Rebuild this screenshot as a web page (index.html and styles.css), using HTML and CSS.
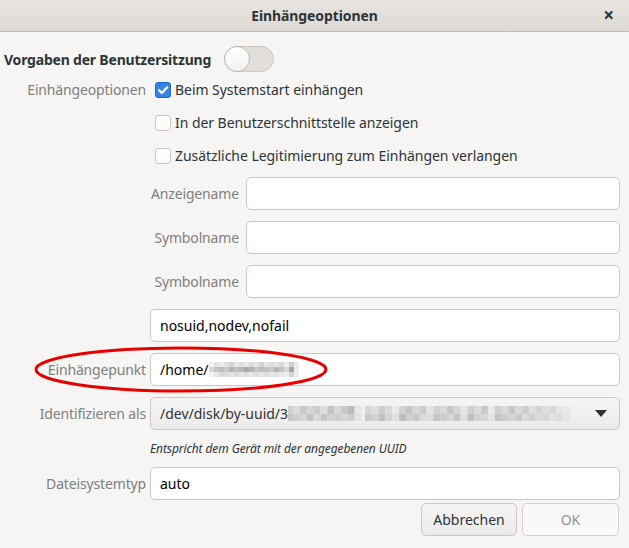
FILE: index.html
```html
<!DOCTYPE html>
<html lang="de">
<head>
<meta charset="utf-8">
<title>Einhängeoptionen</title>
<link rel="stylesheet" href="styles.css">
</head>
<body>
<div class="window">
  <header class="titlebar">
    <span class="title">Einhängeoptionen</span>
    <span class="close">×</span>
  </header>
  <main class="content">
    <div class="toprow">
      <span class="strong">Vorgaben der Benutzersitzung</span>
      <span class="switch"><span class="knob"></span></span>
    </div>
    <div class="form">
      <div class="label label-top">Einhängeoptionen</div>
      <div class="checks">
        <div class="check-row"><span class="check checked"><svg viewBox="0 0 16 16" width="16" height="16"><path d="M4 8.2 L6.8 11 L12.2 5.2" fill="none" stroke="#fff" stroke-width="2.2" stroke-linecap="round" stroke-linejoin="round"/></svg></span><span>Beim Systemstart einhängen</span></div>
        <div class="check-row"><span class="check"></span><span>In der Benutzerschnittstelle anzeigen</span></div>
        <div class="check-row"><span class="check"></span><span>Zusätzliche Legitimierung zum Einhängen verlangen</span></div>
      </div>

      <div></div>
      <div class="subgrid">
        <div class="label">Anzeigename</div><div class="entry"></div>
        <div class="label">Symbolname</div><div class="entry"></div>
        <div class="label">Symbolname</div><div class="entry"></div>
      </div>

      <div></div>
      <div class="entry">nosuid,nodev,nofail</div>

      <div class="label">Einhängepunkt</div>
      <div class="entry">/home/<svg class="blur" width="90" height="15" viewBox="0 0 90 15">
        <rect x="0" y="0" width="90" height="15" fill="#f2f2f2"/>
        <rect x="0" y="5" width="5" height="5" fill="#d6d6d6"/>
        <rect x="5" y="0" width="5" height="5" fill="#e4e4e4"/><rect x="5" y="5" width="5" height="5" fill="#c4c4c4"/><rect x="5" y="10" width="5" height="5" fill="#e6e6e6"/>
        <rect x="10" y="0" width="5" height="5" fill="#ececec"/><rect x="10" y="5" width="5" height="5" fill="#bdbdbd"/><rect x="10" y="10" width="5" height="5" fill="#d8d8d8"/>
        <rect x="15" y="0" width="5" height="5" fill="#e0e0e0"/><rect x="15" y="5" width="5" height="5" fill="#c8c8c8"/><rect x="15" y="10" width="5" height="5" fill="#dcdcdc"/>
        <rect x="20" y="0" width="5" height="5" fill="#d4d4d4"/><rect x="20" y="5" width="5" height="5" fill="#b4b4b4"/><rect x="20" y="10" width="5" height="5" fill="#e2e2e2"/>
        <rect x="25" y="0" width="5" height="5" fill="#e6e6e6"/><rect x="25" y="5" width="5" height="5" fill="#c0c0c0"/><rect x="25" y="10" width="5" height="5" fill="#dadada"/>
        <rect x="30" y="0" width="5" height="5" fill="#dedede"/><rect x="30" y="5" width="5" height="5" fill="#b8b8b8"/><rect x="30" y="10" width="5" height="5" fill="#e4e4e4"/>
        <rect x="35" y="0" width="5" height="5" fill="#e8e8e8"/><rect x="35" y="5" width="5" height="5" fill="#a9a9a9"/><rect x="35" y="10" width="5" height="5" fill="#e0e0e0"/>
        <rect x="40" y="0" width="5" height="5" fill="#dadada"/><rect x="40" y="5" width="5" height="5" fill="#b2b2b2"/><rect x="40" y="10" width="5" height="5" fill="#e8e8e8"/>
        <rect x="45" y="0" width="5" height="5" fill="#e4e4e4"/><rect x="45" y="5" width="5" height="5" fill="#c6c6c6"/><rect x="45" y="10" width="5" height="5" fill="#dcdcdc"/>
        <rect x="50" y="0" width="5" height="5" fill="#d2d2d2"/><rect x="50" y="5" width="5" height="5" fill="#bcbcbc"/><rect x="50" y="10" width="5" height="5" fill="#e6e6e6"/>
        <rect x="55" y="0" width="5" height="5" fill="#e6e6e6"/><rect x="55" y="5" width="5" height="5" fill="#c2c2c2"/><rect x="55" y="10" width="5" height="5" fill="#dedede"/>
        <rect x="60" y="0" width="5" height="5" fill="#dcdcdc"/><rect x="60" y="5" width="5" height="5" fill="#cacaca"/><rect x="60" y="10" width="5" height="5" fill="#e8e8e8"/>
        <rect x="65" y="0" width="5" height="5" fill="#e2e2e2"/><rect x="65" y="5" width="5" height="5" fill="#b6b6b6"/><rect x="65" y="10" width="5" height="5" fill="#e2e2e2"/>
        <rect x="70" y="0" width="5" height="5" fill="#d8d8d8"/><rect x="70" y="5" width="5" height="5" fill="#c4c4c4"/><rect x="70" y="10" width="5" height="5" fill="#eaeaea"/>
        <rect x="75" y="0" width="5" height="5" fill="#eeeeee"/><rect x="75" y="5" width="5" height="5" fill="#dadada"/><rect x="75" y="10" width="5" height="5" fill="#eeeeee"/>
        <rect x="80" y="0" width="5" height="5" fill="#d0d0d0"/><rect x="80" y="5" width="5" height="5" fill="#a4a4a4"/><rect x="80" y="10" width="5" height="5" fill="#d4d4d4"/>
        <rect x="85" y="0" width="5" height="15" fill="#ececec"/>
      </svg></div>

      <div class="label">Identifizieren als</div>
      <div class="combo">
        <span class="combo-text">/dev/disk/by-uuid/3<svg class="blur" width="282" height="15" viewBox="0 0 330 15" preserveAspectRatio="none">
          <rect x="0" y="0" width="330" height="15" fill="#f1f0ef"/>
          <rect x="0" y="0" width="6" height="8" fill="#d0d0d0"/><rect x="0" y="8" width="6" height="7" fill="#c6c6c6"/>
          <rect x="6" y="0" width="8" height="8" fill="#dadada"/><rect x="6" y="8" width="8" height="7" fill="#cfcfcf"/>
          <rect x="14" y="0" width="8" height="8" fill="#c8c8c8"/><rect x="14" y="8" width="8" height="7" fill="#d8d8d8"/>
          <rect x="22" y="0" width="8" height="8" fill="#d6d6d6"/><rect x="22" y="8" width="8" height="7" fill="#c4c4c4"/>
          <rect x="30" y="0" width="8" height="8" fill="#cccccc"/><rect x="30" y="8" width="8" height="7" fill="#dadada"/>
          <rect x="38" y="0" width="8" height="8" fill="#dedede"/><rect x="38" y="8" width="8" height="7" fill="#c8c8c8"/>
          <rect x="46" y="0" width="8" height="8" fill="#c4c4c4"/><rect x="46" y="8" width="8" height="7" fill="#d2d2d2"/>
          <rect x="54" y="0" width="8" height="8" fill="#d8d8d8"/><rect x="54" y="8" width="8" height="7" fill="#cccccc"/>
          <rect x="62" y="0" width="8" height="8" fill="#cacaca"/><rect x="62" y="8" width="8" height="7" fill="#d6d6d6"/>
          <rect x="70" y="0" width="8" height="8" fill="#bcbcbc"/><rect x="70" y="8" width="8" height="7" fill="#cfcfcf"/>
          <rect x="78" y="0" width="8" height="8" fill="#e6e6e6"/><rect x="78" y="8" width="8" height="7" fill="#e2e2e2"/>
          <rect x="90" y="0" width="8" height="8" fill="#d6d6d6"/><rect x="90" y="8" width="8" height="7" fill="#cacaca"/>
          <rect x="98" y="0" width="8" height="8" fill="#e0e0e0"/><rect x="98" y="8" width="8" height="7" fill="#d2d2d2"/>
          <rect x="106" y="0" width="8" height="8" fill="#cdcdcd"/><rect x="106" y="8" width="8" height="7" fill="#c2c2c2"/>
          <rect x="114" y="0" width="8" height="8" fill="#dadada"/><rect x="114" y="8" width="8" height="7" fill="#d4d4d4"/>
          <rect x="122" y="0" width="8" height="8" fill="#e8e8e8"/><rect x="122" y="8" width="8" height="7" fill="#e0e0e0"/>
          <rect x="130" y="0" width="8" height="8" fill="#d2d2d2"/><rect x="130" y="8" width="8" height="7" fill="#bebebe"/>
          <rect x="138" y="0" width="8" height="8" fill="#c6c6c6"/><rect x="138" y="8" width="8" height="7" fill="#d0d0d0"/>
          <rect x="146" y="0" width="8" height="8" fill="#d8d8d8"/><rect x="146" y="8" width="8" height="7" fill="#c8c8c8"/>
          <rect x="154" y="0" width="8" height="8" fill="#cccccc"/><rect x="154" y="8" width="8" height="7" fill="#dadada"/>
          <rect x="162" y="0" width="8" height="8" fill="#e4e4e4"/><rect x="162" y="8" width="8" height="7" fill="#dedede"/>
          <rect x="170" y="0" width="8" height="8" fill="#d2d2d2"/><rect x="170" y="8" width="8" height="7" fill="#c4c4c4"/>
          <rect x="178" y="0" width="8" height="8" fill="#dadada"/><rect x="178" y="8" width="8" height="7" fill="#cecece"/>
          <rect x="186" y="0" width="8" height="8" fill="#c8c8c8"/><rect x="186" y="8" width="8" height="7" fill="#d6d6d6"/>
          <rect x="194" y="0" width="8" height="8" fill="#d6d6d6"/><rect x="194" y="8" width="8" height="7" fill="#c6c6c6"/>
          <rect x="202" y="0" width="8" height="8" fill="#e6e6e6"/><rect x="202" y="8" width="8" height="7" fill="#e2e2e2"/>
          <rect x="210" y="0" width="8" height="8" fill="#cfcfcf"/><rect x="210" y="8" width="8" height="7" fill="#c0c0c0"/>
          <rect x="218" y="0" width="8" height="8" fill="#dcdcdc"/><rect x="218" y="8" width="8" height="7" fill="#d0d0d0"/>
          <rect x="226" y="0" width="8" height="8" fill="#c8c8c8"/><rect x="226" y="8" width="8" height="7" fill="#d8d8d8"/>
          <rect x="234" y="0" width="8" height="8" fill="#e8e8e8"/><rect x="234" y="8" width="8" height="7" fill="#e4e4e4"/>
          <rect x="242" y="0" width="8" height="8" fill="#d0d0d0"/><rect x="242" y="8" width="8" height="7" fill="#c4c4c4"/>
          <rect x="250" y="0" width="8" height="8" fill="#dadada"/><rect x="250" y="8" width="8" height="7" fill="#cccccc"/>
          <rect x="258" y="0" width="8" height="8" fill="#c6c6c6"/><rect x="258" y="8" width="8" height="7" fill="#d4d4d4"/>
          <rect x="266" y="0" width="8" height="8" fill="#d8d8d8"/><rect x="266" y="8" width="8" height="7" fill="#cacaca"/>
          <rect x="274" y="0" width="8" height="8" fill="#cccccc"/><rect x="274" y="8" width="8" height="7" fill="#dadada"/>
          <rect x="282" y="0" width="8" height="8" fill="#dedede"/><rect x="282" y="8" width="8" height="7" fill="#d0d0d0"/>
          <rect x="290" y="0" width="8" height="8" fill="#d4d4d4"/><rect x="290" y="8" width="8" height="7" fill="#dcdcdc"/>
          <rect x="298" y="0" width="8" height="8" fill="#e0e0e0"/><rect x="298" y="8" width="8" height="7" fill="#d6d6d6"/>
          <rect x="306" y="0" width="8" height="8" fill="#d8d8d8"/><rect x="306" y="8" width="8" height="7" fill="#e2e2e2"/>
          <rect x="314" y="0" width="8" height="8" fill="#e4e4e4"/><rect x="314" y="8" width="8" height="7" fill="#dcdcdc"/>
          <rect x="322" y="0" width="8" height="8" fill="#e8e8e8"/><rect x="322" y="8" width="8" height="7" fill="#e6e6e6"/>
        </svg></span>
        <svg class="arrow" width="12" height="7" viewBox="0 0 12 7"><path d="M0 0 H12 L6 7 Z" fill="#2e3436"/></svg>
      </div>

      <div></div>
      <div class="hint">Entspricht dem Gerät mit der angegebenen UUID</div>

      <div class="label">Dateisystemtyp</div>
      <div class="entry">auto</div>
    </div>
    <div class="buttons">
      <button class="btn">Abbrechen</button>
      <button class="btn disabled">OK</button>
    </div>
  </main>
  <svg class="ring" width="296" height="48" viewBox="0 0 296 48"><ellipse cx="148" cy="23.5" rx="145" ry="21.5" fill="none" stroke="#e80000" stroke-width="3"/></svg>
</div>
</body>
</html>
```

FILE: styles.css
```css
* { box-sizing: border-box; }
html, body { margin: 0; padding: 0; }
body {
  width: 629px;
  height: 548px;
  background: #f6f5f4;
  font-family: "Noto Sans", "DejaVu Sans", sans-serif;
  font-size: 14px;
  color: #2e3436;
  overflow: hidden;
}
.window {
  position: relative;
  width: 629px;
  height: 548px;
  background: #f6f5f4;
}
.titlebar {
  height: 32px;
  background: linear-gradient(#e6e3e0, #dedad6);
  border-bottom: 1px solid #bfb8b1;
  display: flex;
  align-items: center;
  justify-content: center;
  position: relative;
}
.title {
  font-weight: bold;
  font-size: 14px;
  color: #2e3436;
  letter-spacing: -0.1px;
}
.close {
  position: absolute;
  right: 15px;
  top: 3px;
  font-weight: bold;
  font-size: 19px;
  line-height: 24px;
  color: #2e3436;
}
.content {
  padding: 14px 9px 0 4px;
}
.toprow {
  display: flex;
  align-items: center;
  height: 26px;
  gap: 13px;
}
.strong { font-weight: bold; letter-spacing: -0.2px; }
.switch {
  width: 50px;
  height: 26px;
  border-radius: 13px;
  background: #e1dedb;
  border: 1px solid #cdc7c2;
  position: relative;
  display: inline-block;
}
.knob {
  position: absolute;
  left: -1px;
  top: -1px;
  width: 26px;
  height: 26px;
  border-radius: 50%;
  background: linear-gradient(#ffffff, #f4f2f1);
  border: 1px solid #bfb8b1;
}
.form {
  display: grid;
  grid-template-columns: 142px minmax(0, 1fr);
  column-gap: 4px;
  row-gap: 11px;
  margin-top: 1px;
}
.form > * { min-width: 0; }
.label {
  color: #7d8080;
  text-align: right;
  display: flex;
  align-items: center;
  justify-content: flex-end;
  height: 33px;
  letter-spacing: -0.15px;
  white-space: nowrap;
}
.checks { display: flex; flex-direction: column; margin-bottom: -6px; }
.check-row {
  height: 33px;
  display: flex;
  align-items: center;
  gap: 4px;
  padding-left: 5px;
  letter-spacing: -0.05px;
}
.check {
  width: 16px;
  height: 16px;
  border-radius: 3px;
  border: 1px solid #cdc7c2;
  background: linear-gradient(#ffffff, #faf9f8);
  display: inline-flex;
  flex: none;
}
.check.checked {
  background: #3584e4;
  border-color: #1b6acb;
}
.check svg { display: block; margin: -1px; }
.subgrid {
  display: grid;
  grid-template-columns: 89px minmax(0, 1fr);
  column-gap: 7px;
  row-gap: 11px;
}
.entry {
  height: 33px;
  min-width: 0;
  background: #ffffff;
  border: 1px solid #cdc7c2;
  border-radius: 5px;
  padding: 0 9px;
  display: flex;
  align-items: center;
  color: #000000;
  white-space: nowrap;
  overflow: hidden;
}
.blur { display: block; flex: none; }
.combo {
  height: 33px;
  min-width: 0;
  background: linear-gradient(#f6f5f4, #edebe9);
  border: 1px solid #cdc7c2;
  border-radius: 5px;
  padding: 0 12px 0 9px;
  display: flex;
  align-items: center;
  justify-content: space-between;
  color: #2e3436;
  white-space: nowrap;
  overflow: hidden;
}
.combo-text { display: flex; align-items: center; flex: none; }
.arrow { display: block; flex: none; }
.hint {
  font-style: italic;
  font-size: 12px;
  line-height: 15px;
  height: 15px;
  color: #2e3436;
  letter-spacing: -0.1px;
}
.buttons {
  display: flex;
  justify-content: flex-end;
  gap: 5px;
  margin-top: 3px;
  padding-right: 1px;
}
.btn {
  font-family: inherit;
  font-size: 14px;
  height: 33px;
  width: 96px;
  border: 1px solid #cdc7c2;
  border-radius: 5px;
  background: linear-gradient(#f6f5f4, #edebe9);
  color: #2e3436;
  padding: 0;
}
.btn.disabled {
  width: 97px;
  background: #faf9f8;
  color: #929595;
  border-color: #d5d0cc;
}
.ring {
  position: absolute;
  left: 33px;
  top: 346px;
}
```
